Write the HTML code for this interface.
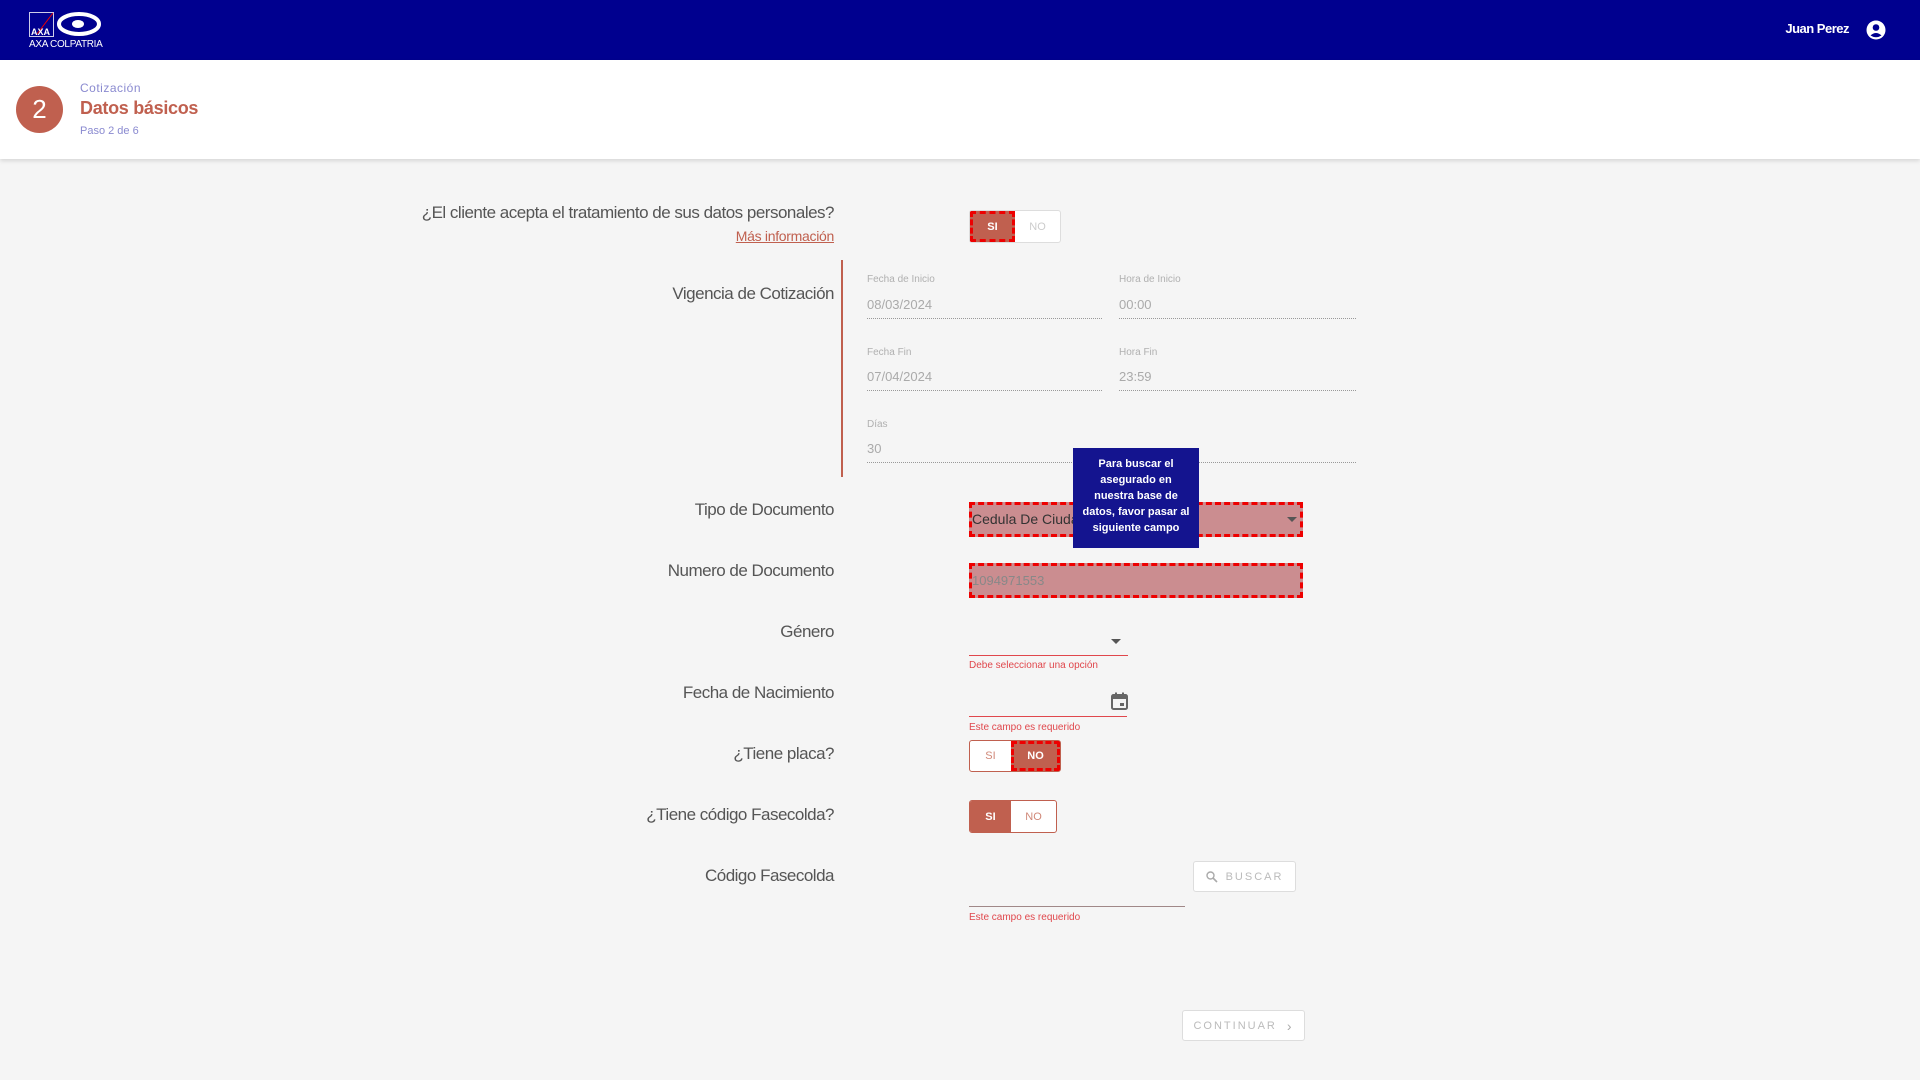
<!DOCTYPE html>
<html><head><meta charset="utf-8"><style>
*{margin:0;padding:0;box-sizing:border-box}
body{width:1920px;height:1080px;background:#f5f5f5;font-family:"Liberation Sans",sans-serif;position:relative;overflow:hidden}
.a{position:absolute}
.lbl{position:absolute;right:1086px;font-size:17px;color:#555;white-space:nowrap;letter-spacing:-0.5px}
.fl{position:absolute;font-size:10px;color:#b0b0b0}
.fv{position:absolute;font-size:13px;color:#aaa}
.ul{position:absolute;border-bottom:1px dotted #999;height:0}
.err{position:absolute;font-size:10px;color:#e0474c}
.tg{position:absolute;border:1px solid #c0604f;border-radius:3px;background:#fff;display:flex;overflow:hidden;font-size:11px}
.tg div{display:flex;align-items:center;justify-content:center}
.on{background:#c0604f;color:#fff;font-weight:bold}
.off{color:#d08878}
.dash{outline:3px dashed #e00;outline-offset:-3px}
</style></head><body>
<div class="a" style="left:0;top:0;width:1920px;height:60px;background:#00008f"></div>
<svg class="a" style="left:29px;top:12px" width="75" height="26" viewBox="0 0 75 26">
<rect x="0.5" y="0.5" width="24" height="24" fill="none" stroke="#fff" stroke-width="0.8"/>
<line x1="24" y1="1" x2="8" y2="22" stroke="#e00" stroke-width="1"/>
<text x="2" y="23" font-size="9" font-weight="bold" fill="#fff" font-family="Liberation Sans">AXA</text>
<ellipse cx="50" cy="12" rx="20" ry="10" fill="none" stroke="#fff" stroke-width="4"/>
<ellipse cx="49" cy="12" rx="6" ry="4" fill="#fff"/>
</svg>
<div class="a" style="left:29px;top:39px;color:#fff;font-size:10px;letter-spacing:-0.3px">AXA COLPATRIA</div>
<div class="a" style="right:71px;top:21px;color:#fff;font-size:13px;font-weight:bold;letter-spacing:-0.5px">Juan Perez</div>
<svg class="a" style="left:1866px;top:20px" width="20" height="20" viewBox="0 0 20 20"><circle cx="10" cy="10" r="9.5" fill="#fff"/><circle cx="10" cy="7.5" r="3.3" fill="#00008f"/><path d="M4.5 15.5 Q10 10.5 15.5 15.5 Q10 19 4.5 15.5Z" fill="#00008f"/></svg>
<div class="a" style="left:0;top:60px;width:1920px;height:99px;background:#fff;box-shadow:0 2px 4px rgba(0,0,0,.12)"></div>
<div class="a" style="left:16px;top:86px;width:47px;height:47px;border-radius:50%;background:#c0604f;color:#fff;font-size:26px;display:flex;align-items:center;justify-content:center">2</div>
<div class="a" style="left:80px;top:81px;font-size:12px;color:#8a8ad0;letter-spacing:0.5px">Cotización</div>
<div class="a" style="left:80px;top:98px;font-size:18px;font-weight:bold;color:#c0604f;letter-spacing:-0.3px">Datos básicos</div>
<div class="a" style="left:80px;top:125px;font-size:11px;color:#8a8ad0">Paso 2 de 6</div>

<div class="lbl" style="top:203px">¿El cliente acepta el tratamiento de sus datos personales?</div>
<div class="a" style="right:1086px;top:228px;font-size:14px;color:#c0604f;text-decoration:underline;letter-spacing:-0.3px">Más información</div>
<div class="tg" style="left:969px;top:210px;width:92px;height:33px;border-color:#ddd"><div class="on dash" style="width:45px">SI</div><div style="flex:1;color:#ccc">NO</div></div>

<div class="a" style="left:841px;top:260px;width:2px;height:217px;background:#c0604f"></div>
<div class="lbl" style="top:284px">Vigencia de Cotización</div>
<div class="fl" style="left:867px;top:274px">Fecha de Inicio</div><div class="fv" style="left:867px;top:297px">08/03/2024</div><div class="ul" style="left:867px;top:318px;width:235px"></div>
<div class="fl" style="left:1119px;top:274px">Hora de Inicio</div><div class="fv" style="left:1119px;top:297px">00:00</div><div class="ul" style="left:1119px;top:318px;width:237px"></div>
<div class="fl" style="left:867px;top:347px">Fecha Fin</div><div class="fv" style="left:867px;top:369px">07/04/2024</div><div class="ul" style="left:867px;top:390px;width:235px"></div>
<div class="fl" style="left:1119px;top:347px">Hora Fin</div><div class="fv" style="left:1119px;top:369px">23:59</div><div class="ul" style="left:1119px;top:390px;width:237px"></div>
<div class="fl" style="left:867px;top:419px">Días</div><div class="fv" style="left:867px;top:441px">30</div><div class="ul" style="left:867px;top:462px;width:489px"></div>

<div class="lbl" style="top:500px">Tipo de Documento</div>
<div class="a dash" style="left:969px;top:502px;width:334px;height:35px;background:#cb8d90;font-size:14px;color:#333;padding:9px 3px">Cedula De Ciudadania</div>
<div class="a" style="left:1287px;top:517px;border:5px solid transparent;border-top-color:#555"></div>
<div class="lbl" style="top:561px">Numero de Documento</div>
<div class="a dash" style="left:969px;top:563px;width:334px;height:35px;background:#cb8d90;font-size:13px;color:#888;padding:10px 3px">1094971553</div>
<div class="a" style="left:1073px;top:448px;width:126px;height:100px;background:#14148f;color:#fff;font-size:11px;font-weight:bold;text-align:center;line-height:16px;padding:8px 6px">Para buscar el asegurado en nuestra base de datos, favor pasar al siguiente campo</div>

<div class="lbl" style="top:622px">Género</div>
<div class="a" style="left:1111px;top:639px;border:5px solid transparent;border-top-color:#555"></div>
<div class="a" style="left:969px;top:655px;width:159px;height:1px;background:#e0474c"></div>
<div class="err" style="left:969px;top:660px">Debe seleccionar una opción</div>

<div class="lbl" style="top:683px">Fecha de Nacimiento</div>
<svg class="a" style="left:1111px;top:692px" width="17" height="18" viewBox="0 0 17 18"><rect x="1" y="3" width="15" height="14" rx="1.5" fill="none" stroke="#666" stroke-width="2"/><rect x="1" y="3" width="15" height="4" fill="#666"/><rect x="4" y="0.5" width="2" height="4" fill="#666"/><rect x="11" y="0.5" width="2" height="4" fill="#666"/><rect x="9" y="11" width="4" height="3" fill="#666"/></svg>
<div class="a" style="left:969px;top:716px;width:158px;height:1px;background:#e0474c"></div>
<div class="err" style="left:969px;top:722px">Este campo es requerido</div>

<div class="lbl" style="top:744px">¿Tiene placa?</div>
<div class="tg" style="left:969px;top:740px;width:92px;height:32px"><div class="off" style="width:41px">SI</div><div class="on dash" style="flex:1">NO</div></div>

<div class="lbl" style="top:805px">¿Tiene código Fasecolda?</div>
<div class="tg" style="left:969px;top:800px;width:88px;height:33px"><div class="on" style="width:41px">SI</div><div class="off" style="flex:1">NO</div></div>

<div class="lbl" style="top:866px">Código Fasecolda</div>
<div class="a" style="left:969px;top:906px;width:216px;height:1px;background:#a08888"></div>
<div class="err" style="left:969px;top:912px">Este campo es requerido</div>
<div class="a" style="left:1193px;top:861px;width:103px;height:31px;border:1px solid #ddd;border-radius:3px;background:#fff;font-size:11px;color:#bbb;letter-spacing:2px;display:flex;align-items:center;justify-content:center;gap:8px">
<svg width="12" height="12" viewBox="0 0 12 12"><circle cx="4.5" cy="4.5" r="3.5" fill="none" stroke="#aaa" stroke-width="1.4"/><line x1="7" y1="7" x2="11" y2="11" stroke="#aaa" stroke-width="1.6"/></svg>BUSCAR</div>
<div class="a" style="left:1182px;top:1010px;width:123px;height:31px;border:1px solid #ddd;border-radius:3px;background:#fff;font-size:11px;color:#bbb;letter-spacing:2px;display:flex;align-items:center;justify-content:center;gap:10px">CONTINUAR <span style="font-size:14px;color:#aaa">›</span></div>
</body></html>
